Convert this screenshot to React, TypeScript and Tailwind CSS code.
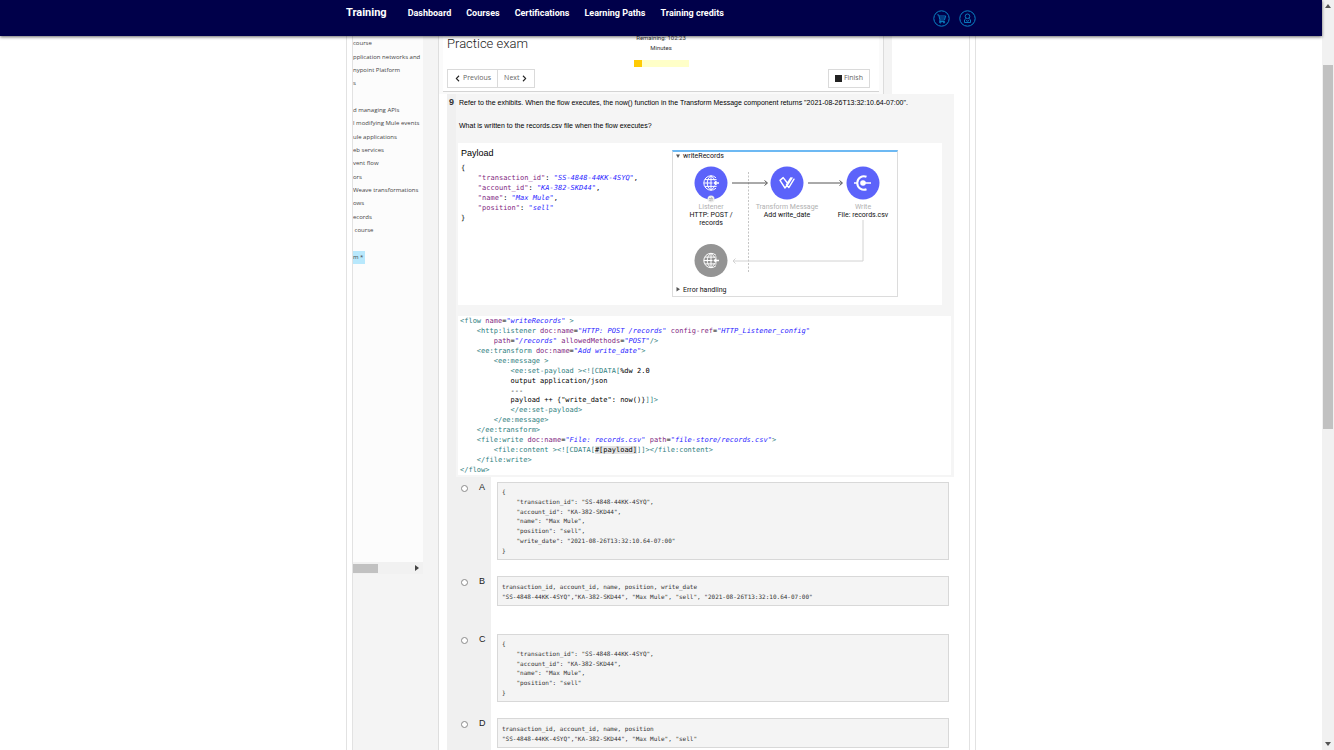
import type { ReactNode } from "react";
import { FaChevronLeft, FaChevronRight } from "react-icons/fa";

const NAV_LINKS = ["Dashboard", "Courses", "Certifications", "Learning Paths", "Training credits"];

const OUTLINE = [
  "course",
  "pplication networks and",
  "nypoint Platform",
  "s",
  "",
  "d managing APIs",
  "l modifying Mule events",
  "ule applications",
  "eb services",
  "vent flow",
  "ors",
  "Weave transformations",
  "ows",
  "ecords",
  " course",
  "",
  "m *",
];

const ANSWERS = [
  {
    letter: "A",
    row: "h-[94px]",
    box: "h-[78px]",
    lines: [
      "{",
      '    "transaction_id": "SS-4848-44KK-4SYQ",',
      '    "account_id": "KA-382-SKD44",',
      '    "name": "Max Mule",',
      '    "position": "sell",',
      '    "write_date": "2021-08-26T13:32:10.64-07:00"',
      "}",
    ],
  },
  {
    letter: "B",
    row: "h-[58px]",
    box: "h-[30px]",
    lines: [
      "transaction_id, account_id, name, position, write_date",
      '"SS-4848-44KK-4SYQ","KA-382-SKD44", "Max Mule", "sell", "2021-08-26T13:32:10.64-07:00"',
    ],
  },
  {
    letter: "C",
    row: "h-[84px]",
    box: "h-[68px]",
    lines: [
      "{",
      '    "transaction_id": "SS-4848-44KK-4SYQ",',
      '    "account_id": "KA-382-SKD44",',
      '    "name": "Max Mule",',
      '    "position": "sell"',
      "}",
    ],
  },
  {
    letter: "D",
    row: "h-[58px]",
    box: "h-[30px]",
    lines: [
      "transaction_id, account_id, name, position",
      '"SS-4848-44KK-4SYQ","KA-382-SKD44", "Max Mule", "sell"',
    ],
  },
];

/** Key / attribute name. */
function K({ children }: { children: ReactNode }) {
  return <span className="text-[#7f1f7f]">{children}</span>;
}

/** String value. */
function S({ children }: { children: ReactNode }) {
  return <span className="text-[#2a1cff] italic">{children}</span>;
}

/** XML tag. */
function T({ children }: { children: ReactNode }) {
  return <span className="text-[#2f8080]">{children}</span>;
}

const PAYLOAD: ReactNode[] = [
  "{",
  <>{"    "}<K>"transaction_id"</K>: <S>"SS-4848-44KK-4SYQ"</S>,</>,
  <>{"    "}<K>"account_id"</K>: <S>"KA-382-SKD44"</S>,</>,
  <>{"    "}<K>"name"</K>: <S>"Max Mule"</S>,</>,
  <>{"    "}<K>"position"</K>: <S>"sell"</S></>,
  "}",
];

const FLOW: ReactNode[] = [
  <><T>&lt;flow</T> <K>name</K>=<S>"writeRecords"</S> <T>&gt;</T></>,
  <>{"    "}<T>&lt;http:listener</T> <K>doc:name</K>=<S>"HTTP: POST /records"</S> <K>config-ref</K>=<S>"HTTP_Listener_config"</S></>,
  <>{"        "}<K>path</K>=<S>"/records"</S> <K>allowedMethods</K>=<S>"POST"</S><T>/&gt;</T></>,
  <>{"    "}<T>&lt;ee:transform</T> <K>doc:name</K>=<S>"Add write_date"</S><T>&gt;</T></>,
  <>{"        "}<T>&lt;ee:message &gt;</T></>,
  <>{"            "}<T>&lt;ee:set-payload &gt;&lt;![CDATA[</T>%dw 2.0</>,
  "            output application/json",
  "            ---",
  <>{'            payload ++ {"write_date": now()}'}<T>]]&gt;</T></>,
  <>{"            "}<T>&lt;/ee:set-payload&gt;</T></>,
  <>{"        "}<T>&lt;/ee:message&gt;</T></>,
  <>{"    "}<T>&lt;/ee:transform&gt;</T></>,
  <>{"    "}<T>&lt;file:write</T> <K>doc:name</K>=<S>"File: records.csv"</S> <K>path</K>=<S>"file-store/records.csv"</S><T>&gt;</T></>,
  <>{"        "}<T>&lt;file:content &gt;&lt;![CDATA[</T><span className="bg-[#e4e4e4]">#[payload]</span><T>]]&gt;&lt;/file:content&gt;</T></>,
  <>{"    "}<T>&lt;/file:write&gt;</T></>,
  <T>&lt;/flow&gt;</T>,
];

/** Code lines spread evenly over the height of the block. */
function CodeLines({ lines, className }: { lines: ReactNode[]; className: string }) {
  return (
    <code className={`grid auto-rows-fr items-center whitespace-pre font-['DejaVu_Sans_Mono',monospace] ${className}`}>
      {lines.map((line, i) => (
        <span key={i}>{line}</span>
      ))}
    </code>
  );
}

function GlobeIcon({ x, y }: { x: number; y: number }) {
  return (
    <g transform={`translate(${x} ${y})`} fill="none" stroke="#fff" strokeWidth="1">
      <path d="M5 -5.2A7.2 7.2 0 1 0 5 5.2" />
      <path d="M0 -7.2V7.2M0 -7.2C-5 -4 -5 4 0 7.2M0 -7.2C2.2 -5.6 3.2 -4 3.4 -2.6M0 7.2C2.2 5.6 3.2 4 3.4 2.6" />
      <path d="M-6 -3.4H5.6M-7.2 0H1.5M-6 3.4H5.6" />
      <path d="M8 0H3.6M5.4 -2L3.4 0L5.4 2" strokeWidth="1.4" />
    </g>
  );
}

function NodeLabel({ type, name, className }: { type: string; name: string; className: string }) {
  return (
    <div className={`absolute top-[51px] text-center ${className}`}>
      <div className="text-[#b0b0b0]">{type}</div>
      <div className="text-[#111]">{name}</div>
    </div>
  );
}

function FlowDiagram() {
  return (
    <div className="relative mt-[7px] h-[147px] w-[226px] border border-t-2 border-[#dcdcdc] border-t-[#6db9f3] font-['Roboto',sans-serif] text-[7px] leading-[8px]">
      <svg className="absolute -top-[2px] -left-px" width="226" height="147" viewBox="0 0 226 147" fill="none">
        <path d="M4 4.5h4l-2 3.5z" fill="#555" />
        <path d="M4.5 137v4.5l3.5-2.2z" fill="#555" />
        <path d="M76.5 22V122" stroke="#c4c4c4" strokeDasharray="2 1.5" />
        <path d="M60 33H95M92.5 30.5L95.5 33L92.5 35.5M136 33H170M167.5 30.5L170.5 33L167.5 35.5" stroke="#555" />
        <path d="M191 70V111H61M63.5 108.5L61 111L63.5 113.5" stroke="#d2d2d2" />
        <circle cx="39" cy="33" r="16.5" fill="#5c63fa" />
        <circle cx="115" cy="33" r="16.5" fill="#5c63fa" />
        <circle cx="191" cy="33" r="16.5" fill="#5c63fa" />
        <circle cx="39" cy="110.5" r="16.5" fill="#949494" />
        <GlobeIcon x={39} y={33} />
        <GlobeIcon x={39} y={110.5} />
        <circle cx="39" cy="49" r="3.5" fill="#eee" />
        <path d="M37 48.5h3.5l-1.2-1.3M41 50h-3.5l1.2 1.3" stroke="#999" strokeWidth="0.6" />
        <path
          d="M114.8 32.2L111.2 27.6L108 30.4L113 38L115.4 35L120 27.8M122 29.2L116.8 37.6L114.4 34.8L118.8 28"
          stroke="#fff"
          strokeWidth="1.4"
          strokeLinecap="round"
          strokeLinejoin="round"
        />
        <path d="M194.5 26.8A6.7 6.7 0 1 0 194.5 39.2" stroke="#fff" strokeWidth="2" />
        <path d="M182 33H185M191 33H199" stroke="#fff" strokeWidth="1.6" />
        <circle cx="191" cy="33" r="2.8" fill="#fff" />
      </svg>
      <div className="absolute left-[10px] text-[#111]">writeRecords</div>
      <div className="absolute bottom-[2px] left-[10px] text-[#111]">Error handling</div>
      <NodeLabel type="Listener" name="HTTP: POST / records" className="left-[15px] w-[46px]" />
      <NodeLabel type="Transform Message" name="Add write_date" className="left-[79px] w-[70px]" />
      <NodeLabel type="Write" name="File: records.csv" className="left-[155px] w-[70px]" />
    </div>
  );
}

function TopBar() {
  return (
    <header className="relative z-10 h-9 shrink-0 bg-[#00004a] font-['Roboto',sans-serif] font-bold text-white shadow-[0_1px_3px_rgba(0,0,0,0.6)]">
      <div className="mx-auto flex w-full max-w-[630px] justify-between">
        <nav className="flex h-[27px] items-center gap-[15px] text-[9px]">
          <a href="#" className="mr-[6px] text-[11px]">Training</a>
          {NAV_LINKS.map((label) => (
            <a key={label} href="#">{label}</a>
          ))}
        </nav>
        <div className="flex items-center gap-[9px] pt-[9px]">
          <button type="button" aria-label="Cart">
            <svg className="block" width="17" height="17" viewBox="0 0 17 17" fill="none" stroke="#0a84c6">
              <circle cx="8.5" cy="8.5" r="7.7" />
              <path d="M4.3 4.8H5.6L7 10H11.5L12.7 6H6M6.5 8H12M7 10L6.5 11.5H11.8" strokeWidth="0.9" />
              <circle cx="7.3" cy="12.5" r="0.6" />
              <circle cx="11" cy="12.5" r="0.6" />
            </svg>
          </button>
          <button type="button" aria-label="Account">
            <svg className="block" width="17" height="17" viewBox="0 0 17 17" fill="none" stroke="#0a84c6">
              <circle cx="8.5" cy="8.5" r="7.7" />
              <circle cx="8.5" cy="6.3" r="2.3" strokeWidth="0.9" />
              <path d="M7.2 8.3L5.5 9.8V12.5H11.5V9.8L9.8 8.3M7 10.5L8.5 11.2L10 10.5" strokeWidth="0.9" />
            </svg>
          </button>
        </div>
      </div>
    </header>
  );
}

function Sidebar() {
  return (
    <aside className="w-[86px] shrink-0 border-r border-[#dedede] bg-[#f4f4f4]">
      <div className="h-[526px] w-[70px] overflow-hidden bg-[#fcfcfc] pt-px">
        <ul className="grid h-[227px] auto-rows-fr items-center font-['Open_Sans',sans-serif] text-[6px] leading-[13px] whitespace-pre text-[#444]">
          {OUTLINE.map((label, i) => (
            <li key={i}>
              <a href="#" className={label === "m *" ? "inline-block bg-[#b8e8fc] pr-[2px]" : ""}>{label}</a>
            </li>
          ))}
        </ul>
      </div>
      <div className="flex h-3 w-[70px] items-center justify-between bg-[#f1f1f1] pr-[4px]">
        <div className="h-[9px] w-[25px] bg-[#c1c1c1]" />
        <svg width="4" height="6" viewBox="0 0 4 6"><path d="M0 0L4 3L0 6z" fill="#444" /></svg>
      </div>
    </aside>
  );
}

function ExamHead() {
  const button = "flex h-[19px] items-center gap-[2px] border border-[#dadada] bg-white px-[6px] text-[#666]";
  return (
    <div className="flex h-[58px] w-[453px] border-r-8 border-[#f3f3f3] bg-[#fafafa] pl-[4px]">
      <div className="flex-1 border-r border-[#dcdcdc] pr-[4px]">
        <div className="flex h-[56px] flex-col justify-between border-b border-[#d4d4d4] bg-white pb-[3px] pl-[4px]">
          <div className="grid grid-cols-[1fr_70px_1fr] pr-[4px] font-['Roboto',sans-serif]">
            <h1 className="text-[13px] leading-[16px] font-light text-[#222]">Practice exam</h1>
            <div className="-mt-[3px] flex flex-col items-center text-center text-[6px] leading-[10px] text-[#333]">
              <p>Remaining: 102:23<br />Minutes</p>
              <div className="mt-[7px] flex h-[7px] w-[55px] shrink-0 bg-[#ffffc8]">
                <div className="w-[8px] bg-[#ffcb05]" />
              </div>
            </div>
          </div>
          <div className="flex justify-between pr-[9px] font-['Open_Sans',sans-serif] text-[7px]">
            <div className="flex">
              <button type="button" className={button}>
                <FaChevronLeft className="size-[7px] text-[#222]" />Previous
              </button>
              <button type="button" className={`${button} -ml-px`}>
                Next<FaChevronRight className="size-[7px] text-[#222]" />
              </button>
            </div>
            <button type="button" className={button}>
              <span className="size-[7px] bg-[#222]" />Finish
            </button>
          </div>
        </div>
      </div>
    </div>
  );
}

function Question() {
  return (
    <section className="ml-[8px] flex h-[383px] w-[507px] bg-[#f5f5f5] font-['Liberation_Sans',sans-serif] text-black">
      <div className="w-[9px] bg-[#f0f0f0] pt-[2px] pl-[2px] text-[9px] leading-[12px] font-bold text-[#333]">9</div>
      <div className="flex-1 pr-[3px] pl-[2px]">
        <p className="pt-[4px] pl-px text-[7px] leading-[10px] whitespace-nowrap">
          Refer to the exhibits. When the flow executes, the now() function in the Transform Message component returns
          "2021-08-26T13:32:10.64-07:00".
        </p>
        <p className="mt-[13px] pl-px text-[7px] leading-[10px]">
          What is written to the records.csv file when the flow executes?
        </p>
        <div className="mt-[12px] mr-[9px] flex h-[162px] bg-white pl-[3px]">
          <div className="w-[211px]">
            <h2 className="pt-[5px] text-[9px] leading-[11px]">Payload</h2>
            <CodeLines lines={PAYLOAD} className="mt-[5px] h-[59px] text-[7px] leading-[9px]" />
          </div>
          <FlowDiagram />
        </div>
        <div className="mt-[11px] h-[159px] bg-white pt-px pl-[2px]">
          <CodeLines lines={FLOW} className="h-[158px] text-[7px] leading-[9px]" />
        </div>
      </div>
    </section>
  );
}

function Answers() {
  return (
    <div role="radiogroup" aria-label="Answer" className="ml-[8px] w-[507px] font-['Liberation_Sans',sans-serif]">
      {ANSWERS.map((answer, i) => (
        <label
          key={answer.letter}
          className={`flex ${answer.row} ${i === 0 ? "box-content pt-[5px]" : ""} bg-linear-to-r from-[#f0f0f0] from-[44px] to-white to-[44px]`}
        >
          <span className="flex h-[12px] w-[50px] shrink-0 items-center gap-[11px] pl-[14px] text-[9px] text-[#222]">
            <input
              type="radio"
              name="answer"
              className="size-[7px] appearance-none rounded-full border border-[#8a8a8a] bg-white checked:border-2"
            />
            {answer.letter}
          </span>
          <span className={`mr-[5px] flex-1 border border-[#d8d8d8] bg-[#f4f4f4] p-[4px] ${answer.box}`}>
            <CodeLines lines={answer.lines} className="h-full text-[6px] leading-[9px] text-[#333]" />
          </span>
        </label>
      ))}
    </div>
  );
}

function PageScrollbar() {
  return (
    <div className="flex w-3 shrink-0 flex-col items-center justify-between bg-[#f1f1f1] py-[4px]">
      <svg width="6" height="4" viewBox="0 0 6 4"><path d="M0 4L3 0L6 4z" fill="#555" /></svg>
      <div className="-mt-[256px] h-[364px] w-[10px] bg-[#c1c1c1]" />
      <svg width="6" height="4" viewBox="0 0 6 4"><path d="M0 0L3 4L6 0z" fill="#555" /></svg>
    </div>
  );
}

export default function App() {
  return (
    <div className="flex h-screen overflow-hidden bg-white">
      <div className="flex min-w-0 flex-1 flex-col">
        <TopBar />
        <div className="mx-auto flex min-h-0 w-full max-w-[630px] flex-1 border-x border-[#e2e2e2] px-[5px]">
          <div className="flex min-w-0 flex-1 border-x border-[#e2e2e2]">
            <Sidebar />
            <main className="min-w-0 flex-1">
              <ExamHead />
              <Question />
              <Answers />
            </main>
          </div>
        </div>
      </div>
      <PageScrollbar />
    </div>
  );
}
